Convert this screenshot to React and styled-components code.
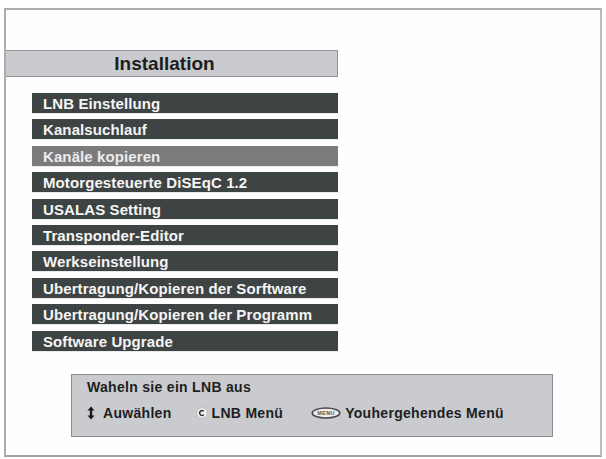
import React from "react";
import styled, { createGlobalStyle } from "styled-components";

const Global = createGlobalStyle`
  html, body { margin: 0; padding: 0; background: #ffffff; }
  body { font-family: "Liberation Sans", Arial, sans-serif; }
`;

const Page = styled.div`
  width: 606px;
  height: 459px;
  padding: 8px 4px 2px 4px;
  box-sizing: border-box;
  background: #ffffff;
`;

const Frame = styled.div`
  width: 598px;
  height: 449px;
  box-sizing: border-box;
  border: 2px solid #acacac;
  border-right-color: #bdbdbd;
  border-bottom-color: #a4a4a4;
  background: #fefefe;
  display: flex;
  flex-direction: column;
  padding-top: 40px;
`;

const TitleBar = styled.div`
  width: 332px;
  height: 27px;
  box-sizing: border-box;
  background: #c9cbce;
  border: 1px solid #8f9194;
  border-left: none;
  display: flex;
  align-items: center;
  justify-content: center;
  padding-right: 14px;
  font-size: 19px;
  font-weight: 700;
  color: #1d1d1d;
`;

const Menu = styled.div`
  margin: 16px 0 0 26px;
  width: 306px;
  display: flex;
  flex-direction: column;
  gap: 6.4px;
`;

const Item = styled.div`
  height: 20px;
  line-height: 21px;
  padding-left: 11px;
  background: ${(p) => (p.$active ? "#7b7b7b" : "#3e4443")};
  color: ${(p) => (p.$active ? "#ececec" : "#f5f5f5")};
  font-size: 15px;
  font-weight: 700;
  letter-spacing: 0.1px;
  white-space: nowrap;
  overflow: hidden;
  box-shadow: 0 1px 0 rgba(0, 0, 0, 0.08);
`;

const InfoBox = styled.div`
  margin: 23px 0 0 65px;
  width: 482px;
  height: 63px;
  box-sizing: border-box;
  background: #c9cbce;
  border: 1px solid #8a8c8f;
  padding: 4px 0 0 15px;
  display: flex;
  flex-direction: column;
  gap: 9px;
  color: #1e1e1e;
  font-size: 14px;
  font-weight: 700;
  letter-spacing: 0.3px;
`;

const Hint = styled.div`
  line-height: 17px;
`;

const Keys = styled.div`
  display: flex;
  align-items: center;
  line-height: 17px;
`;

const Key = styled.div`
  display: flex;
  align-items: center;
  gap: ${(p) => p.$gap}px;
  margin-right: ${(p) => p.$after}px;
`;

const UpDown = () => (
  <svg width="8" height="14" viewBox="0 0 8 14">
    <path d="M4 0.5 L7.5 4.5 H5.2 V9.5 H7.5 L4 13.5 L0.5 9.5 H2.8 V4.5 H0.5 Z" fill="#1a1a1a" />
  </svg>
);

const OkButton = () => (
  <svg width="12" height="12" viewBox="0 0 12 12">
    <circle cx="6" cy="6" r="5.3" fill="#f2f2f2" stroke="#b8b8b8" strokeWidth="0.8" />
    <path d="M7.8 4.3 A2.4 2.4 0 1 0 7.8 7.7" fill="none" stroke="#2a2a2a" strokeWidth="1.4" />
  </svg>
);

const MenuButton = () => (
  <svg width="30" height="12" viewBox="0 0 30 12">
    <ellipse cx="15" cy="6" rx="13.8" ry="5" fill="#eeeeee" stroke="#4a4a4a" strokeWidth="1.6" />
    <text x="15" y="8" textAnchor="middle" fontSize="5.5" fontWeight="700" fill="#555" fontFamily="Liberation Sans, Arial, sans-serif">MENU</text>
  </svg>
);

const items = [
  "LNB Einstellung",
  "Kanalsuchlauf",
  "Kanäle kopieren",
  "Motorgesteuerte DiSEqC 1.2",
  "USALAS Setting",
  "Transponder-Editor",
  "Werkseinstellung",
  "Ubertragung/Kopieren der Sorftware",
  "Ubertragung/Kopieren der Programm",
  "Software Upgrade",
];

export default function App() {
  return (
    <>
      <Global />
      <Page>
        <Frame>
          <TitleBar>Installation</TitleBar>
          <Menu>
            {items.map((t, i) => (
              <Item key={t} $active={i === 2}>
                {t}
              </Item>
            ))}
          </Menu>
          <InfoBox>
            <Hint>Waheln sie ein LNB aus</Hint>
            <Keys>
              <Key $gap={8} $after={24}>
                <UpDown />
                <span>Auwählen</span>
              </Key>
              <Key $gap={4} $after={28}>
                <OkButton />
                <span>LNB Menü</span>
              </Key>
              <Key $gap={4} $after={0}>
                <MenuButton />
                <span>Youhergehendes Menü</span>
              </Key>
            </Keys>
          </InfoBox>
        </Frame>
      </Page>
    </>
  );
}
